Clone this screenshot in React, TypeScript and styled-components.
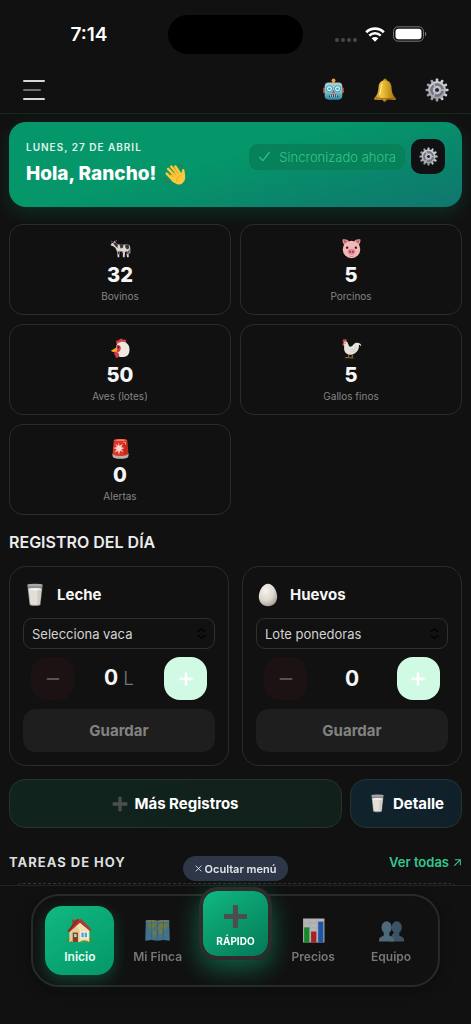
import React, { useState } from "react";
import styled, { createGlobalStyle } from "styled-components";

const GlobalStyle = createGlobalStyle`
  *, *::before, *::after { box-sizing: border-box; }
  body { margin: 0; background: #111111; color: #f3f3f3; }
  body, button, select { font-family: Inter, "Liberation Sans", sans-serif; }
  button, select { margin: 0; padding: 0; border: 0; background: none; color: inherit; cursor: pointer; }
  h1, h2, h3, p { margin: 0; }
  svg { display: block; flex: none; }
`;

/* ---------- Icons ---------- */

type IconProps = { size: number };

const RobotIcon = ({ size }: IconProps) => (
  <svg width={size} height={size} viewBox="0 0 24 24" aria-hidden="true">
    <defs>
      <linearGradient id="robotFace" x1="0" y1="0" x2="0" y2="1">
        <stop offset="0" stopColor="#b4cdd2" />
        <stop offset=".55" stopColor="#7fbfcb" />
        <stop offset="1" stopColor="#1e8ba4" />
      </linearGradient>
    </defs>
    <rect x="10.8" y="2" width="2.4" height="4" fill="#c64e37" />
    <circle cx="12" cy="2.4" r="2" fill="#f0a526" />
    <rect x="1" y="10" width="3" height="6" rx="1.4" fill="#b8442f" />
    <rect x="20" y="10" width="3" height="6" rx="1.4" fill="#b8442f" />
    <rect x="2.8" y="4.6" width="18.4" height="18" rx="4" fill="url(#robotFace)" />
    <circle cx="7.8" cy="11.2" r="3.1" fill="#e2fbff" stroke="#2f93a8" strokeWidth="1" />
    <circle cx="16.2" cy="11.2" r="3.1" fill="#e2fbff" stroke="#2f93a8" strokeWidth="1" />
    <circle cx="7.8" cy="11.2" r="1.3" fill="#2aa4c0" />
    <circle cx="16.2" cy="11.2" r="1.3" fill="#2aa4c0" />
    <path d="M12 12.6l1.6 3h-3.2z" fill="#cf4a38" />
    <path d="M7 19.800c.6-2 2-2.800 5-2.800s4.400.8 5 2.800z" fill="#4a2f35" />
    <path d="M9 17.500v2.200M11 17.200v2.500M13 17.200v2.500M15 17.500v2.200" stroke="#d8e6e8" strokeWidth=".9" />
  </svg>
);

const BellIcon = ({ size }: IconProps) => (
  <svg width={size} height={size} viewBox="0 0 24 24" aria-hidden="true">
    <defs>
      <linearGradient id="bellBody" x1="0" y1="0" x2="1" y2="0">
        <stop offset="0" stopColor="#b98314" />
        <stop offset=".35" stopColor="#eec844" />
        <stop offset=".65" stopColor="#cf9c1e" />
        <stop offset="1" stopColor="#a06c0c" />
      </linearGradient>
    </defs>
    <circle cx="12" cy="2.2" r="1.7" fill="#b48518" />
    <circle cx="11.6" cy="21.8" r="2" fill="#b07d16" />
    <path d="M12 2.2c4 0 6.300 2.900 6.500 7 .2 4.200 1 7.200 2.700 9.200 1.200 1.500 2.200 2 1.800 3-.6 1.200-5 .2-11 .2S1.600 22.400 1 21.200c-.4-1 .6-1.500 1.800-3 1.700-2 2.500-5 2.700-9 .2-4.100 2.500-7 6.500-7z" fill="url(#bellBody)" />
    <path d="M2.500 19.700c4 1.300 15 1.300 19 0" stroke="#8f620c" strokeWidth=".9" fill="none" />
    <path d="M8.800 6.500c-1 3-1 7-2.300 10.500" stroke="#ffe88c" strokeWidth="1.200" fill="none" strokeLinecap="round" />
  </svg>
);

const GearIcon = ({ size }: IconProps) => (
  <svg width={size} height={size} viewBox="0 0 24 24" aria-hidden="true">
    <defs>
      <linearGradient id="gearMetal" x1="0" y1="0" x2="0" y2="1">
        <stop offset="0" stopColor="#cfd1d6" />
        <stop offset="1" stopColor="#9b9da4" />
      </linearGradient>
    </defs>
    {[0, 30, 60, 90, 120, 150].map((angle) => (
      <rect key={angle} x="10.700" y=".5" width="2.600" height="23" rx=".8" fill="url(#gearMetal)" transform={`rotate(${angle} 12 12)`} />
    ))}
    <circle cx="12" cy="12" r="8.900" fill="url(#gearMetal)" />
    <circle cx="12" cy="12" r="6.300" fill="#777a84" stroke="#5e6069" strokeWidth=".8" />
    <circle cx="12" cy="12" r="4.200" fill="#c2c4cb" />
    <circle cx="12" cy="12" r="2" fill="#22242a" />
    <path d="M14 12h5.500M11 10.300L8.300 5.500M11 13.700l-2.700 4.800" stroke="#b6b8c0" strokeWidth="1.500" />
  </svg>
);

const WaveIcon = ({ size }: IconProps) => (
  <svg width={size} height={size} viewBox="0 0 24 24" aria-hidden="true">
    <path d="M3 11.500L11 20M4.500 6.500L15 17M8 4l9.500 11M12.500 4l6 9" stroke="#fcc83c" strokeWidth="2.800" strokeLinecap="round" />
    <path d="M6 14L16 8c1.500 2 2.400 3 3 2.800.6-.2.300-2.500 1-3.600.6-.9 2.200-.7 2.300.7.200 2.800 1.300 6.100.7 9.200-.8 4-4.200 6.800-7.800 6.300-3.500-.4-6.500-4.200-9.200-9.400z" fill="#fcc83c" />
    <path d="M5.800 10.400l4 4.400M7.500 7l5.300 6M11 5.500l4.500 5.500" stroke="#d68b16" strokeWidth=".8" strokeLinecap="round" />
    <path d="M14.200 20.500c-.7-3 .7-5.500 3.600-7" stroke="#e09b20" strokeWidth=".8" fill="none" />
    <path d="M16 1.500c2 .3 3.400 1.300 4.200 3.100M1.200 16.500c.5 2.500 2 4.400 4.400 5.200" stroke="#4d6c48" strokeWidth="1.500" fill="none" strokeLinecap="round" />
  </svg>
);

const CowIcon = ({ size }: IconProps) => (
  <svg width={size} height={size} viewBox="0 0 24 24" aria-hidden="true">
    <path d="M1 6.500l3-1.500 1-2 1.500 2L9 7c4 1.200 8 .4 11.500.4 2 .4 2.700 2 2.700 5v5.300h-1v-5.500l-1.200 3 .5 6.800h-2l-1-6-1.300-.4-.4 6.400h-2l-.2-6.600c-1.600.2-2.800.1-3.800-.3l-.2 6.900H8.800L8 15.500 6 11 3.500 9.400l-2.300-.7z" fill="#dcd6d1" />
    <path d="M3.500 5.300L6.400 5 9 7.400l-.5 4.100L6.800 10 5 8zM11 7.700l4.500-.1-.8 3.400-2.700 1zM17.700 7.500l3.600.2.800 4.100-2.800 1.400-2-2.800zM8.600 15l2 .6-.4 3-1.300.2zM18 15l2.200.4.200 3-1.600.5z" fill="#3d3736" />
    <path d="M1 6.800l1.700.4v1.700l-1.700-.4z" fill="#d3a29b" />
    <path d="M13.500 15.300h2.700l-.8 1.500h-1z" fill="#d99b95" />
    <path d="M2.600 4.700L1.500 3.200M6.300 4l1.300-1.500" stroke="#998d82" strokeWidth="1" />
  </svg>
);

const PigIcon = ({ size }: IconProps) => (
  <svg width={size} height={size} viewBox="0 0 24 24" aria-hidden="true">
    <path d="M2 1.500c3-.6 6 .3 7 2.300L4.500 9C2.500 7 1 3.500 2 1.500zM22 1.500c-3-.6-6 .3-7 2.300L19.500 9c2-2 3.500-5.500 2.500-7.500z" fill="#e39a9b" />
    <path d="M3 2.300c2 0 3.400.8 4 2L4.800 7C3.700 5.500 3 4 3 2.300zM21 2.300c-2 0-3.400.8-4 2L19.200 7c1.100-1.500 1.800-3 1.800-4.700z" fill="#bd6569" />
    <ellipse cx="12" cy="13" rx="10" ry="10" fill="#f4b9b6" />
    <circle cx="7" cy="11" r="1.400" fill="#32201f" />
    <circle cx="17" cy="11" r="1.400" fill="#32201f" />
    <ellipse cx="12" cy="15.800" rx="4.400" ry="3.400" fill="#e58794" />
    <ellipse cx="10.400" cy="15.800" rx=".9" ry="1.500" fill="#8e3350" />
    <ellipse cx="13.600" cy="15.800" rx=".9" ry="1.500" fill="#8e3350" />
    <path d="M9.500 20.500c1.500.9 3.500.9 5 0" stroke="#ba666a" strokeWidth=".8" fill="none" />
  </svg>
);

const HenIcon = ({ size }: IconProps) => (
  <svg width={size} height={size} viewBox="0 0 24 24" aria-hidden="true">
    <path d="M7.500 7C6 3.500 8 1.800 10 3c.6-2.600 4-2.900 5-.7 2-1.500 4.300.2 3.300 2.400L17 8z" fill="#d8404c" />
    <path d="M12.500 4.500c6-.8 9.800 3 9.800 8.700 0 5-2 8.300-7 8.600-4.500.3-7.300-1.300-7.600-4.500L7 11c0-3.500 2-6 5.500-6.500z" fill="#eee8df" />
    <path d="M7.600 8.500c2.400-1.200 5 .7 4.700 3.700-.3 2.800-2.800 4.500-5.300 4.100z" fill="#d23b49" />
    <path d="M8.200 10.200L1 14.600c.8 1 3.500 1.700 6.800 1.300z" fill="#f2a922" />
    <path d="M5.200 15.800c2.400-.8 4.700.6 5.200 2.900.4 2.400-1 4.300-2.800 4-1.400-.3-1.700-1.400-1.400-2.700-1.200-.4-2-2.800-1-4.200z" fill="#d23b49" />
    <circle cx="9.600" cy="10.500" r="1.100" fill="#241818" />
  </svg>
);

const RoosterIcon = ({ size }: IconProps) => (
  <svg width={size} height={size} viewBox="0 0 24 24" aria-hidden="true">
    <path d="M2.500 5C.9 2.500 2.500.8 4.200 1.600 5.200.3 7.200 1.500 6.300 3.500L4.500 9c-1.200 1-2.500.2-2-1.500z" fill="#d1424a" />
    <path d="M3.500 4.500C5 2.800 7.400 3.700 7.900 6l1.400 3.500c1.900 1 3.500-.2 4.900-2.200C16 4.800 19.600 4.800 22 6.500c1.200 1 1.200 2 .7 3-.7-1.400-1.600-1.700-2.200-1.400.6 5.400-3.700 11-9.400 11.100C6 19.200 3 15.500 3.600 10.500z" fill="#e6e2dc" />
    <path d="M10.500 13.500c3 .5 5.500-.5 7.500-3M9.800 15.800c2.700.8 5 0 6.700-1.500" stroke="#c9c3bb" strokeWidth=".8" fill="none" />
    <path d="M9 19l-.4 3.500M13 19l-.3 3.500M4.500 22.500h4.800M9.700 22.700h4.500" stroke="#a57c2d" strokeWidth="1.100" />
    <path d="M3 6l-2 1.200 2.300.4z" fill="#e5a22a" />
    <circle cx="4.700" cy="5.600" r=".6" fill="#221a18" />
  </svg>
);

const SirenIcon = ({ size }: IconProps) => (
  <svg width={size} height={size} viewBox="0 0 24 24" aria-hidden="true">
    <path d="M2.600 18h18.800l-.5 3c-.3 3.500-17.500 3.500-17.800 0z" fill="#b8b0ae" />
    <path d="M4.300 2.200C6 .6 18 .6 19.700 2.200L21 18c-1.200 3.400-16.800 3.400-18 0z" fill="#dd3525" />
    <path d="M5 2.500c2-1.300 12-1.300 14 0-2 1.300-12 1.300-14 0z" fill="#f07a61" />
    <path d="M15.500 4v14.500c2.500-.2 4.500-.8 5-1.500L19.300 4z" fill="#c02a1c" />
    <path d="M10 5.200l1 3.900 3.600-2.400-1.900 3.800 4.100.8-3.900 1.500 2.500 3.500-3.900-2L10.300 19l-1.200-4.500-3.800 2 2.300-3.700-3.500-1.300L8 10.300 6 6.800l3.300 2.100z" fill="#ffd5cc" />
    <path d="M15 4.600l3 .6-.3 2.500" stroke="#ff9b6e" strokeWidth="1.200" fill="none" />
  </svg>
);

const MilkIcon = ({ size }: IconProps) => (
  <svg width={size} height={size} viewBox="0 0 24 24" aria-hidden="true">
    <path d="M4.300 1.800h15.400l-2.200 20c-.4 1.600-10.600 1.600-11 0z" fill="#8d8d8e" />
    <path d="M5.500 6h13l-1.700 15c-.5 1.200-9.100 1.200-9.600 0z" fill="#e2dfd7" />
    <path d="M14.500 7h3.800L16.700 21c-.8.500-1.500.7-2.400.8z" fill="#d1cdc4" />
    <ellipse cx="12" cy="2" rx="7.700" ry="1.300" fill="#a9a9ab" />
    <ellipse cx="12" cy="6.200" rx="6.500" ry="1.200" fill="#f6f4ef" />
  </svg>
);

const EggIcon = ({ size }: IconProps) => (
  <svg width={size} height={size} viewBox="0 0 24 24" aria-hidden="true">
    <defs>
      <radialGradient id="eggShell" cx=".38" cy=".3" r=".75">
        <stop offset="0" stopColor="#f7f4ee" />
        <stop offset=".6" stopColor="#dcd7ce" />
        <stop offset="1" stopColor="#a39c91" />
      </radialGradient>
    </defs>
    <path d="M12 .8c5 0 9.200 7.200 9.200 13 0 5.600-3.800 9.500-9.200 9.500s-9.200-3.900-9.200-9.500c0-5.800 4.200-13 9.200-13z" fill="url(#eggShell)" />
  </svg>
);

const HeavyPlusIcon = ({ size }: IconProps) => (
  <svg width={size} height={size} viewBox="0 0 24 24" aria-hidden="true">
    <path d="M9.500 1h5v8.500H23v5h-8.500V23h-5v-8.500H1v-5h8.500z" fill="#4b4d4e" />
  </svg>
);

const HouseIcon = ({ size }: IconProps) => (
  <svg width={size} height={size} viewBox="0 0 24 24" aria-hidden="true">
    <path d="M0 23l1-4 3-1v5.300H0zM20 23.300V18l3 1 1 4.300z" fill="#4d8a2c" />
    <rect x="5" y="1.500" width="3" height="7" fill="#a04130" />
    <path d="M2.500 11.500L12 4l9.500 7.500V23h-19z" fill="#f3dfb4" />
    <path d="M2.500 11.500L8 7l4 5v11H2.500z" fill="#e6ca98" />
    <path d="M.5 12.500L9.500 1.300h4.200L23.500 11l-1.200 1.600L12.500 4.500 2 13.700z" fill="#b3382b" />
    <path d="M.5 12.500L9.500 1.300l2 .2-9.500 12z" fill="#7f3027" />
    <rect x="5.500" y="14" width="5" height="9" fill="#7c3e24" />
    <rect x="6.800" y="15.300" width="2.400" height="3" fill="#b9d3df" />
    <rect x="13.300" y="13.500" width="6.500" height="5.500" fill="#5ba0cf" stroke="#fffbe9" strokeWidth=".9" />
    <path d="M16.500 13.500V19" stroke="#fffbe9" strokeWidth=".8" />
    <path d="M3 23.300c.5-1.600 2-1.600 2.500 0M12 23.300c2-2.600 7-2.600 10 0z" fill="#5d9b36" />
  </svg>
);

const MapIcon = ({ size }: IconProps) => (
  <svg width={size} height={size} viewBox="0 0 24 24" aria-hidden="true">
    <path d="M.8 2.500l5.500-.5 5.700.6 5.700-.6 5.500.5.6 19.300-6.200-.8-5.600.8-5.700-.8-6.100.8z" fill="#41728c" />
    <path d="M.8 2.500l5.500-.5 5.700.6 5.700-.6 5.500.5v1.300l-5.500-.5-5.700.6-5.700-.6-5.500.5z" fill="#8b7c55" />
    <path d="M2 7.300l2.500-2 3.300-.5 3.300.8-.9 2.300-2 .8-1 2.300-1.800-.2L3.800 8.600zM7 12.300l2.200-.2 2 1.700-1.200 2.300-1.300 3.500-1.200-3.200zM12.500 7.200l2.200-1.900 3.600-.3 3.700 1.100-.4 2.300-1.600 1.300-.8 2-1.500-1.600-1.200-.7-.7 1.100 1 1.500-1.100 3.600-1.200.8-1-3.600-1.700-1.800zM19 15.500l2.200.4-.5 1.700-1.800-.4z" fill="#717a3c" />
    <path d="M6.300 2v19M12 2.600v19M17.700 2v19" stroke="#33596d" strokeWidth=".5" />
  </svg>
);

const ChartIcon = ({ size }: IconProps) => (
  <svg width={size} height={size} viewBox="0 0 24 24" aria-hidden="true">
    <rect x="2" y=".5" width="20.500" height="23" fill="#b3b5b7" />
    <path d="M2 5h20M2 9.500h20M2 14h20M2 18.500h20M8.500.5v23M15.500.5v23" stroke="#a0a3a5" strokeWidth=".5" />
    <rect x="3" y="9" width="5" height="14.500" fill="#168a28" />
    <rect x="9.700" y="13" width="5" height="10.500" fill="#a91f24" />
    <rect x="16.500" y="3.500" width="5" height="20" fill="#1f55a3" />
  </svg>
);

const PeopleIcon = ({ size }: IconProps) => (
  <svg width={size} height={size} viewBox="0 0 24 24" aria-hidden="true">
    <g fill="#3c5265">
      <ellipse cx="17" cy="9" rx="4.900" ry="6" />
      <path d="M14 14h5.500v3c2.400.8 4.500 1.500 4.500 4v1.500H11V19z" />
    </g>
    <g fill="#4e687c">
      <ellipse cx="7.300" cy="9" rx="4.900" ry="6" />
      <path d="M4.500 14h5.500v3c2.900.8 4.600 1.600 4.600 4.500v1H0V21c0-2.500 2-3.200 4.500-4z" />
    </g>
  </svg>
);

const WifiIcon = () => (
  <svg width="20" height="15" viewBox="0 0 20 15" aria-label="Wi-Fi" role="img">
    <path d="M1.200 5.300a12.600 12.600 0 0 1 17.600 0" stroke="#fff" strokeWidth="2.700" fill="none" />
    <path d="M4.300 8.600a8.200 8.200 0 0 1 11.400 0" stroke="#fff" strokeWidth="2.500" fill="none" />
    <path d="M10 14.800l-3.400-3.500a4.900 4.900 0 0 1 6.800 0z" fill="#fff" />
  </svg>
);

const BatteryIcon = () => (
  <svg width="34" height="16" viewBox="0 0 34 16" aria-label="Batería" role="img">
    <rect x=".5" y=".8" width="30" height="14.400" rx="4.600" fill="none" stroke="#77777a" />
    <rect x="2.500" y="2.700" width="26" height="10.600" rx="3" fill="#fff" />
    <path d="M32 5.600c1.700.7 1.700 4.100 0 4.800z" fill="#77777a" />
  </svg>
);

const StrokeIcon = ({ size, d, width = 2 }: IconProps & { d: string; width?: number }) => (
  <svg width={size} height={size} viewBox="0 0 16 16" fill="none" stroke="currentColor" strokeWidth={width} strokeLinecap="round" strokeLinejoin="round" aria-hidden="true">
    <path d={d} />
  </svg>
);

/* ---------- Layout ---------- */

const Page = styled.div`
  min-height: 100vh;
  background: #111111;
`;

const StatusBar = styled.div`
  display: grid;
  grid-template-columns: 1fr 135px 1fr;
  align-items: center;
  height: 68px;
`;

const Clock = styled.span`
  justify-self: center;
  padding: 2px 0 0 10px;
  color: #ffffff;
  font-size: 19px;
  font-weight: 600;
  line-height: 24px;
`;

const Island = styled.div`
  height: 39px;
  border-radius: 20px;
  background: #000000;
`;

const Signals = styled.div`
  display: flex;
  align-items: center;
  justify-content: center;
  gap: 8px;
  padding-right: 12px;
`;

const Dots = styled.div`
  display: flex;
  gap: 2px;
  padding-top: 11px;
  i { width: 4px; height: 4px; border-radius: 2px; background: #48484a; }
`;

const TopBar = styled.header`
  display: flex;
  align-items: center;
  justify-content: space-between;
  height: 46px;
  padding: 0 20px 2px;
  border-bottom: 1px solid #14281f;
`;

const MenuButton = styled.button`
  display: grid;
  align-content: center;
  gap: 7px;
  width: 28px;
  height: 28px;
  padding-left: 3px;
  span { width: 22px; height: 2px; border-radius: 1px; background: #d5d6d9; }
  span:nth-child(2) { width: 18px; background: #6c6e75; }
`;

const TopActions = styled.div`
  display: flex;
  gap: 24px;
`;

const IconButton = styled.button`
  display: grid;
  place-items: center;
  width: 28px;
  height: 28px;
`;

const Main = styled.main`
  padding: 8px 9px 40px;
`;

const Hero = styled.section`
  display: flex;
  align-items: flex-start;
  justify-content: space-between;
  height: 85px;
  padding: 17px;
  border-radius: 17px;
  background: linear-gradient(165deg, #059669 0%, #059669 45%, #0f766e 100%);
  box-shadow: 0 6px 18px rgba(5, 150, 105, 0.22);
`;

const DateLine = styled.p`
  color: #e0f3ec;
  font-size: 10px;
  font-weight: 600;
  line-height: 16px;
  letter-spacing: 1px;
`;

const Greeting = styled.h1`
  display: flex;
  align-items: center;
  gap: 8px;
  margin-top: 5px;
  color: #ffffff;
  font-size: 19px;
  font-weight: 800;
  line-height: 28px;
`;

const HeroActions = styled.div`
  display: flex;
  align-items: center;
  gap: 6px;
`;

const SyncBadge = styled.div`
  display: flex;
  align-items: center;
  gap: 8px;
  height: 26px;
  padding: 0 9px;
  border-radius: 9px;
  background: #078159;
  color: #34c78e;
  font-size: 13px;
  font-weight: 300;
  line-height: 20px;
`;

const HeroSettings = styled.button`
  display: grid;
  place-items: center;
  width: 34px;
  height: 35px;
  border-radius: 10px;
  background: #111113;
`;

const StatGrid = styled.section`
  display: grid;
  grid-template-columns: 1fr 1fr;
  gap: 9px;
  margin-top: 17px;
`;

const StatCard = styled.article`
  display: flex;
  flex-direction: column;
  align-items: center;
  height: 91px;
  padding-top: 13px;
  border: 1px solid #2b2b2b;
  border-radius: 14px;
`;

const StatValue = styled.strong`
  margin-top: 2px;
  color: #f6f6f6;
  font-size: 20px;
  font-weight: 800;
  line-height: 28px;
`;

const StatLabel = styled.span`
  color: #858585;
  font-size: 10px;
  line-height: 14px;
`;

const SectionTitle = styled.h2`
  margin-top: 17px;
  color: #ececec;
  font-size: 16px;
  font-weight: 600;
  line-height: 20px;
`;

const LogGrid = styled.section`
  display: grid;
  grid-template-columns: 1fr 1fr;
  gap: 13px;
  margin-top: 14px;
`;

const LogCard = styled.article`
  min-width: 0;
  height: 200px;
  padding: 15px 13px 13px;
  border: 1px solid #2b2b2b;
  border-radius: 17px;
`;

const LogTitle = styled.h3`
  display: flex;
  align-items: center;
  gap: 10px;
  height: 25px;
  color: #f6f6f6;
  font-size: 15px;
  font-weight: 700;
`;

const SelectBox = styled.div`
  position: relative;
  margin-top: 11px;
  color: #000000;
  svg { position: absolute; top: 9px; right: 7px; pointer-events: none; }
`;

const Select = styled.select`
  appearance: none;
  width: 100%;
  height: 31px;
  padding: 0 28px 0 8px;
  border: 1px solid #303030;
  border-radius: 9px;
  color: #d3d3d3;
  font-size: 13px;
`;

const Stepper = styled.div`
  display: flex;
  align-items: center;
  justify-content: space-between;
  margin-top: 8px;
  padding: 0 8px;
`;

const StepButton = styled.button<{ $kind: "minus" | "plus" }>`
  display: grid;
  place-items: center;
  width: 43px;
  height: 43px;
  border-radius: 16px;
  background: ${({ $kind }) => ($kind === "plus" ? "#d1fae5" : "#1d1213")};
  color: ${({ $kind }) => ($kind === "plus" ? "#ffffff" : "#575254")};
`;

const Amount = styled.output`
  color: #f6f6f6;
  font-size: 21px;
  font-weight: 700;
  line-height: 28px;
  small { margin-left: 5px; color: #777777; font-size: 19px; font-weight: 300; }
`;

const SaveButton = styled.button`
  width: 100%;
  height: 43px;
  margin-top: 9px;
  border-radius: 13px;
  background: #1e1e1e;
  color: #828282;
  font-size: 15px;
  font-weight: 700;
`;

const ActionRow = styled.div`
  display: flex;
  gap: 8px;
  margin-top: 13px;
`;

const ActionButton = styled.button<{ $tone: "green" | "blue" }>`
  display: flex;
  align-items: center;
  justify-content: center;
  gap: 6px;
  height: 49px;
  border: 1px solid #263330;
  border-radius: 16px;
  color: #ffffff;
  font-size: 15px;
  font-weight: 700;
  ${({ $tone }) =>
    $tone === "green"
      ? "flex: 1; background: linear-gradient(90deg, #10241d, #11201b);"
      : "width: 112px; background: linear-gradient(90deg, #10232b, #10202b);"}
`;

const TaskHeader = styled.div`
  display: flex;
  align-items: center;
  justify-content: space-between;
  margin-top: 24px;
`;

const TaskTitle = styled.h2`
  color: #dedede;
  font-size: 13px;
  font-weight: 700;
  line-height: 20px;
  letter-spacing: 1px;
`;

const TaskLink = styled.a`
  display: flex;
  align-items: center;
  gap: 4px;
  color: #34c78e;
  font-size: 13px;
  font-weight: 600;
  line-height: 20px;
  text-decoration: none;
`;

const TaskList = styled.div`
  height: 80px;
  margin-top: 11px;
  border: 1px dashed #363636;
  border-radius: 14px;
`;

/* ---------- Bottom navigation ---------- */

const Dock = styled.div`
  position: fixed;
  right: 0;
  bottom: 0;
  left: 0;
  height: 139px;
  padding: 8px 31px 37px;
  border-top: 1px solid #242424;
  background: #111111;
`;

const HideMenu = styled.button`
  position: absolute;
  top: -30px;
  left: 50%;
  display: flex;
  align-items: center;
  gap: 3px;
  height: 25px;
  padding: 0 12px;
  border-radius: 13px;
  background: #2d3748;
  color: #e2e5ea;
  font-size: 11px;
  font-weight: 600;
  white-space: nowrap;
  transform: translateX(-50%);
`;

const Nav = styled.nav`
  display: grid;
  grid-template-columns: repeat(5, minmax(0, 1fr));
  justify-items: center;
  height: 93px;
  padding: 10px 8px;
  border: 2px solid #292929;
  border-radius: 28px;
  box-shadow: 0 4px 16px rgba(0, 0, 0, 0.3);
`;

const NavItem = styled.a<{ $active?: boolean }>`
  display: flex;
  flex-direction: column;
  align-items: center;
  gap: 6px;
  width: 69px;
  height: 69px;
  padding-top: 12px;
  border-radius: 17px;
  color: ${({ $active }) => ($active ? "#e9fff6" : "#777777")};
  font-size: 12px;
  font-weight: 600;
  line-height: 16px;
  text-decoration: none;
  white-space: nowrap;
  ${({ $active }) =>
    $active &&
    `background: linear-gradient(145deg, #10b981, #059669);
     box-shadow: 0 5px 15px rgba(16, 185, 129, 0.3);`}
`;

const QuickButton = styled.button`
  display: flex;
  flex-direction: column;
  align-items: center;
  gap: 5px;
  width: 73px;
  height: 73px;
  margin-top: -19px;
  padding-top: 13px;
  border: 4px solid #2d2d2d;
  border-radius: 18px;
  background: linear-gradient(145deg, #10b981, #047857) padding-box;
  box-shadow: 0 9px 24px rgba(16, 185, 129, 0.45);
  color: #ffffff;
  font-size: 10px;
  font-weight: 700;
  line-height: 14px;
`;

const stats = [
  { Icon: CowIcon, value: 32, label: "Bovinos" },
  { Icon: PigIcon, value: 5, label: "Porcinos" },
  { Icon: HenIcon, value: 50, label: "Aves (lotes)" },
  { Icon: RoosterIcon, value: 5, label: "Gallos finos" },
  { Icon: SirenIcon, value: 0, label: "Alertas" },
];

type LogProps = {
  title: string;
  option: string;
  unit?: string;
  Icon: React.ComponentType<IconProps>;
};

function DailyLog({ title, option, unit, Icon }: LogProps) {
  const [count, setCount] = useState(0);
  return (
    <LogCard>
      <LogTitle><Icon size={24} />{title}</LogTitle>
      <SelectBox>
        <Select aria-label={option} defaultValue="">
          <option value="">{option}</option>
        </Select>
        <StrokeIcon size={13} width={1.5} d="M4 5.500L8 2l4 3.500M4 10.500L8 14l4-3.500" />
      </SelectBox>
      <Stepper>
        <StepButton $kind="minus" aria-label={`Restar ${title}`} onClick={() => setCount(Math.max(0, count - 1))}>
          <StrokeIcon size={16} d="M2.500 8h11" />
        </StepButton>
        <Amount>{count}{unit && <small>{unit}</small>}</Amount>
        <StepButton $kind="plus" aria-label={`Sumar ${title}`} onClick={() => setCount(count + 1)}>
          <StrokeIcon size={16} width={2.5} d="M2.500 8h11M8 2.500v11" />
        </StepButton>
      </Stepper>
      <SaveButton>Guardar</SaveButton>
    </LogCard>
  );
}

export default function App() {
  return (
    <Page>
      <GlobalStyle />
      <StatusBar>
        <Clock>7:14</Clock>
        <Island />
        <Signals>
          <Dots><i /><i /><i /><i /></Dots>
          <WifiIcon />
          <BatteryIcon />
        </Signals>
      </StatusBar>
      <TopBar>
        <MenuButton aria-label="Menú"><span /><span /><span /></MenuButton>
        <TopActions>
          <IconButton aria-label="Asistente"><RobotIcon size={23} /></IconButton>
          <IconButton aria-label="Notificaciones"><BellIcon size={24} /></IconButton>
          <IconButton aria-label="Ajustes"><GearIcon size={24} /></IconButton>
        </TopActions>
      </TopBar>

      <Main>
        <Hero>
          <div>
            <DateLine>LUNES, 27 DE ABRIL</DateLine>
            <Greeting>Hola, Rancho! <WaveIcon size={22} /></Greeting>
          </div>
          <HeroActions>
            <SyncBadge>
              <StrokeIcon size={13} width={1.5} d="M2 9l4 4 8-10" />
              Sincronizado ahora
            </SyncBadge>
            <HeroSettings aria-label="Configurar panel"><GearIcon size={19} /></HeroSettings>
          </HeroActions>
        </Hero>

        <StatGrid>
          {stats.map(({ Icon, value, label }) => (
            <StatCard key={label}>
              <Icon size={21} />
              <StatValue>{value}</StatValue>
              <StatLabel>{label}</StatLabel>
            </StatCard>
          ))}
        </StatGrid>

        <SectionTitle>REGISTRO DEL DÍA</SectionTitle>
        <LogGrid>
          <DailyLog title="Leche" option="Selecciona vaca" unit="L" Icon={MilkIcon} />
          <DailyLog title="Huevos" option="Lote ponedoras" Icon={EggIcon} />
        </LogGrid>

        <ActionRow>
          <ActionButton $tone="green"><HeavyPlusIcon size={16} />Más Registros</ActionButton>
          <ActionButton $tone="blue"><MilkIcon size={19} />Detalle</ActionButton>
        </ActionRow>

        <TaskHeader>
          <TaskTitle>TAREAS DE HOY</TaskTitle>
          <TaskLink href="#tareas">Ver todas <StrokeIcon size={9} width={2} d="M3 13L13 3M4 3h9v9" /></TaskLink>
        </TaskHeader>
        <TaskList id="tareas" />
      </Main>

      <Dock>
        <HideMenu><StrokeIcon size={7} width={2} d="M2 2l12 12M14 2L2 14" />Ocultar menú</HideMenu>
        <Nav aria-label="Principal">
          <NavItem href="#inicio" $active><HouseIcon size={25} />Inicio</NavItem>
          <NavItem href="#finca"><MapIcon size={25} />Mi Finca</NavItem>
          <QuickButton><HeavyPlusIcon size={25} />RÁPIDO</QuickButton>
          <NavItem href="#precios"><ChartIcon size={25} />Precios</NavItem>
          <NavItem href="#equipo"><PeopleIcon size={25} />Equipo</NavItem>
        </Nav>
      </Dock>
    </Page>
  );
}
